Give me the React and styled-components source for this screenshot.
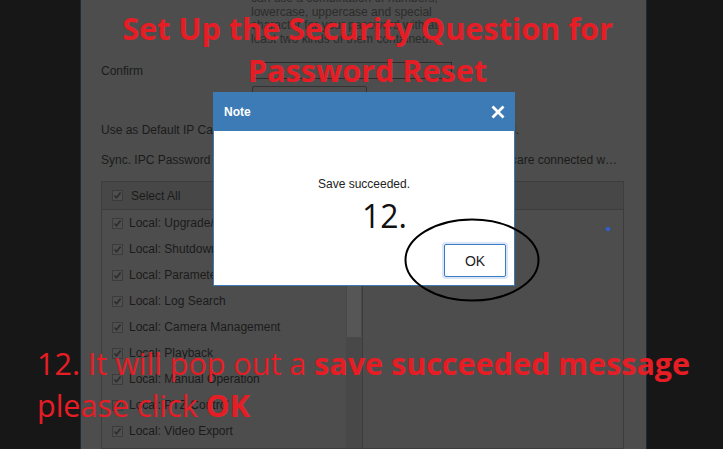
import React from 'react';
import styled, { createGlobalStyle } from 'styled-components';

const GlobalStyle = createGlobalStyle`
  html, body { margin: 0; padding: 0; background: #171717; }
  body { overflow: hidden; }
  #root { width: 723px; height: 449px; }
`;

const Screen = styled.div`
  position: relative;
  width: 723px;
  height: 449px;
  display: flex;
  overflow: hidden;
  background: #171717;
  font-family: "Liberation Sans", Arial, sans-serif;
`;

const Gutter = styled.div`
  flex: none;
  width: ${p => p.$w}px;
  background: #171717;
`;

const Page = styled.main`
  flex: none;
  width: 567px;
  box-sizing: border-box;
  border-left: 1px solid #1c2b3b;
  border-right: 1px solid #1c2b3b;
  background: #4d4d4d;
  padding-left: 20px;
  display: flex;
  flex-direction: column;
  color: #1b1b1b;
  font-size: 12px;
  overflow: hidden;
`;

const FormRow = styled.div`
  flex: none;
  display: grid;
  grid-template-columns: 150px auto;
  align-items: center;
  height: ${p => (p.$h ? `${p.$h}px` : 'auto')};
  margin-top: ${p => p.$mt}px;
  white-space: nowrap;
`;

const Label = styled.span`
  white-space: nowrap;
  overflow: visible;
`;

const Hint = styled.div`
  grid-column: 2;
  line-height: 13.5px;
  color: #2c2c2c;
`;

const InputBox = styled.div`
  width: 201px;
  height: 17px;
  box-sizing: border-box;
  border: 1px solid #2b2b2b;
`;

const StrengthBox = styled.div`
  grid-column: 2;
  margin-left: 1px;
  width: 115px;
  height: 20px;
  box-sizing: border-box;
  border: 1px solid #333;
  border-radius: 2px;
`;

const Value = styled.span`
  display: flex;
  width: ${p => p.$w}px;
  justify-content: ${p => (p.$end ? 'flex-end' : 'flex-start')};
  overflow: hidden;
  white-space: nowrap;
`;

const Lead = styled.span`
  flex: none;
  width: ${p => p.$w}px;
  overflow: hidden;
`;

const Tail = styled.span`
  flex: 1;
  min-width: 0;
  overflow: hidden;
  text-overflow: ellipsis;
`;

const Tables = styled.div`
  flex: 1;
  display: flex;
  margin-top: 11px;
  min-height: 0;
`;

const Panel = styled.section`
  flex: none;
  width: ${p => p.$w}px;
  box-sizing: border-box;
  border: 1px solid #3d3d3d;
  border-right: ${p => (p.$noRight ? 'none' : '1px solid #3d3d3d')};
  display: flex;
  flex-direction: column;
`;

const PanelHead = styled.div`
  flex: none;
  height: 27px;
  background: #474747;
  border-bottom: 1px solid #3d3d3d;
  display: flex;
  align-items: center;
  gap: 8px;
  padding-left: 10px;
`;

const PanelBody = styled.div`
  flex: 1;
  display: flex;
  min-height: 0;
`;

const List = styled.ul`
  flex: 1;
  list-style: none;
  margin: 0;
  padding: 0;
`;

const Item = styled.li`
  height: 26px;
  display: flex;
  align-items: center;
  gap: 6px;
  padding-left: 10px;
  white-space: nowrap;
`;

const ScrollTrack = styled.div`
  flex: none;
  width: 16px;
  background: #484848;
  display: flex;
  flex-direction: column;
`;

const ScrollThumb = styled.div`
  margin: 1px 1px 0 1px;
  height: 126px;
  background: #565656;
`;

const TreeBody = styled.div`
  flex: 1;
  display: flex;
  justify-content: flex-end;
  align-items: flex-start;
  padding: 17px 13px 0 0;
`;

const Marker = styled.span`
  width: 4px;
  height: 4px;
  background: #2f5fd0;
  transform: rotate(45deg);
`;

const CheckBox = styled.span`
  flex: none;
  width: 11px;
  height: 11px;
  box-sizing: border-box;
  border: 1px solid #3b3b3b;
  background: #4f4f4f;
  display: inline-flex;
  align-items: center;
  justify-content: center;
`;

const Check = () => (
  <CheckBox>
    <svg width="9" height="9" viewBox="0 0 9 9">
      <path d="M1.5 4.5 L3.6 6.8 L7.6 1.6" stroke="#2d2d2d" strokeWidth="1.7" fill="none" />
    </svg>
  </CheckBox>
);

/* dialog */
const Dialog = styled.div`
  position: absolute;
  left: 213px;
  top: 92px;
  width: 302px;
  height: 194px;
  box-sizing: border-box;
  background: #fff;
  border: 1px solid #3d7bb6;
  display: flex;
  flex-direction: column;
  font-family: "Liberation Sans", Arial, sans-serif;
`;

const DialogHead = styled.header`
  flex: none;
  height: 38px;
  background: #3d7bb6;
  color: #fff;
  display: flex;
  align-items: center;
  justify-content: space-between;
  padding: 0 9px 0 10px;
  font-size: 12px;
  font-weight: 700;
`;

const DialogBody = styled.div`
  flex: 1;
  display: flex;
  flex-direction: column;
  padding: 46px 8px 8px;
`;

const Message = styled.p`
  margin: 0;
  text-align: center;
  font-size: 12px;
  line-height: 14px;
  color: #222;
`;

const Footer = styled.div`
  margin-top: auto;
  display: flex;
  justify-content: flex-end;
`;

const OkButton = styled.button`
  width: 62px;
  height: 33px;
  box-sizing: border-box;
  background: #fff;
  border: 1px solid #3b7bc4;
  border-radius: 2px;
  box-shadow: 0 0 0 2px #dae5f5;
  font-family: "Liberation Sans", Arial, sans-serif;
  font-size: 14px;
  color: #222;
  padding: 0;
`;

/* annotation layer */
const Annotations = styled.div`
  position: absolute;
  inset: 0;
  pointer-events: none;
  font-family: "Open Sans", sans-serif;
  color: #e71d25;
`;

const Title = styled.h1`
  position: absolute;
  top: 7px;
  left: 12px;
  right: 0;
  margin: 0;
  text-align: center;
  font-size: 30.6px;
  font-weight: 700;
  line-height: 42px;
  white-space: nowrap;
`;

const StepNumber = styled.div`
  position: absolute;
  left: 362px;
  top: 200px;
  font-size: 32px;
  line-height: 32px;
  color: #111;
`;

const Caption = styled.p`
  position: absolute;
  left: 37px;
  top: 342px;
  margin: 0;
  font-size: 30.5px;
  line-height: 42px;
  white-space: nowrap;
  b { font-weight: 700; }
`;

const Ring = styled.svg`
  position: absolute;
  left: 404px;
  top: 218px;
`;

const items = [
  'Local: Upgrade/Format',
  'Local: Shutdown/Reboot',
  'Local: Parameters Settings',
  'Local: Log Search',
  'Local: Camera Management',
  'Local: Playback',
  'Local: Manual Operation',
  'Local: PTZ Control',
  'Local: Video Export',
];

export default function App() {
  return (
    <>
      <GlobalStyle />
      <Screen>
        <Gutter $w={80} />
        <Page>
          <FormRow $mt={-8}>
            <span />
            <Hint>
              can use a combination of numbers,<br />
              lowercase, uppercase and special<br />
              character for your password with at<br />
              least two kinds of them contained.
            </Hint>
          </FormRow>
          <FormRow $mt={16} $h={17}>
            <Label>Confirm</Label>
            <InputBox />
          </FormRow>
          <FormRow $mt={7} $h={20}>
            <span />
            <StrengthBox />
          </FormRow>
          <FormRow $mt={14} $h={20}>
            <Label>Use as Default IP Camera Password</Label>
            <Value $w={268} $end>
              <span>Apply it to the IP cameras added with default password.</span>
            </Value>
          </FormRow>
          <FormRow $mt={10} $h={20}>
            <Label>Sync. IPC Password</Label>
            <Value $w={367}>
              <Lead $w={266}>Synchronize the password to the IP cameras which </Lead>
              <Tail>are connected with the default protocol.</Tail>
            </Value>
          </FormRow>
          <Tables>
            <Panel $w={261} $noRight>
              <PanelHead>
                <Check />
                <span>Select All</span>
              </PanelHead>
              <PanelBody>
                <List>
                  {items.map(t => (
                    <Item key={t}>
                      <Check />
                      <span>{t}</span>
                    </Item>
                  ))}
                </List>
                <ScrollTrack>
                  <ScrollThumb />
                </ScrollTrack>
              </PanelBody>
            </Panel>
            <Panel $w={262}>
              <PanelHead />
              <TreeBody>
                <Marker />
              </TreeBody>
            </Panel>
          </Tables>
        </Page>
        <Gutter $w={76} />

        <Dialog>
          <DialogHead>
            <span>Note</span>
            <svg width="14" height="14" viewBox="0 0 14 14">
              <path d="M1.5 1.5 L12.5 12.5 M12.5 1.5 L1.5 12.5" stroke="#fff" strokeWidth="2.8" />
            </svg>
          </DialogHead>
          <DialogBody>
            <Message>Save succeeded.</Message>
            <Footer>
              <OkButton>OK</OkButton>
            </Footer>
          </DialogBody>
        </Dialog>

        <Annotations>
          <Title>
            Set Up the Security Question for
            <br />
            Password Reset
          </Title>
          <StepNumber>12.</StepNumber>
          <Ring width="136" height="84" viewBox="0 0 136 84">
            <ellipse cx="68" cy="42" rx="66.5" ry="40.5" fill="none" stroke="#000" strokeWidth="2" />
          </Ring>
          <Caption>
            12. It will pop out a <b>save succeeded message</b>
            <br />
            please click <b>OK</b>
          </Caption>
        </Annotations>
      </Screen>
    </>
  );
}
